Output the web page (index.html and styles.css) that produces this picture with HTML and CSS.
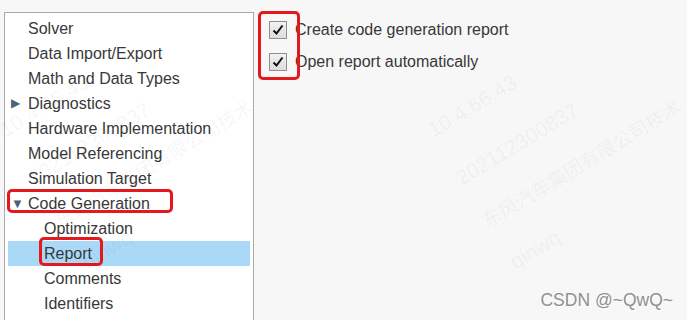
FILE: index.html
```html
<!DOCTYPE html>
<html>
<head>
    <title>Configuration Parameters</title>
    <link rel="stylesheet" href="styles.css">
</head>
<body>
    <div id="container">
        <div class="tree">
            <ul class="tree-list">
                <li class="item">Solver</li>
                <li class="item">Data Import/Export</li>
                <li class="item">Math and Data Types</li>
                <li class="item"><span class="arrow">&#9654;</span>Diagnostics</li>
                <li class="item">Hardware Implementation</li>
                <li class="item">Model Referencing</li>
                <li class="item">Simulation Target</li>
                <li class="item"><span class="arrow down">&#9660;</span>Code Generation<span class="mark mark-codegen"></span></li>
                <li class="item sub">Optimization</li>
                <li class="item sub selected">Report<span class="mark mark-report"></span></li>
                <li class="item sub">Comments</li>
                <li class="item sub">Identifiers</li>
            </ul>
        </div>
        <div class="settings">
            <label class="option">
                <span class="checkbox"><svg width="16" height="16" viewBox="0 0 16 16"><path d="M3.5 8.5 L6.5 11.5 L12.5 3.5" fill="none" stroke="#111" stroke-width="2"/></svg></span>
                Create code generation report
            </label>
            <label class="option">
                <span class="checkbox"><svg width="16" height="16" viewBox="0 0 16 16"><path d="M3.5 8.5 L6.5 11.5 L12.5 3.5" fill="none" stroke="#111" stroke-width="2"/></svg></span>
                Open report automatically
            </label>
            <span class="mark mark-checks"></span>
        </div>
    </div>

    <!-- 水印 -->
    <div class="watermark wm-right">
        <span class="wm wm-ip">10.4.66.43</span>
        <span class="wm wm-date">202112300837</span>
        <span class="wm wm-company">东风汽车集团有限公司技术</span>
        <span class="wm wm-user">qinwq</span>
    </div>
    <div class="watermark wm-left">
        <span class="wm wm-ip">10.4.66.43</span>
        <span class="wm wm-date">202112300837</span>
        <span class="wm wm-company">东风汽车集团有限公司技术</span>
        <span class="wm wm-user">qinwq</span>
    </div>

    <div class="credit">CSDN @~QwQ~</div>
</body>
</html>
```

FILE: styles.css
```css
:root {
    --bg-color: #f7f7f7;
    --text-color: #383838;
    --border-color: #a9a9a9;
    --select-color: #a9d9f7;
    --mark-color: #e4191e;
}

html, body {
    height: 100%;
}

body {
    margin: 0;
    background-color: var(--bg-color);
    color: var(--text-color);
    font-family: "Liberation Sans", Arial, sans-serif;
    font-size: 16px;
    overflow: hidden;
    position: relative;
}

#container {
    display: flex;
    height: 100%;
    padding: 12px 0 0 4px;
    box-sizing: border-box;
}

.tree {
    width: 250px;
    box-sizing: border-box;
    background-color: white;
    border: 1px solid var(--border-color);
    border-bottom: none;
    padding: 3px 3px 0 3px;
}

.tree-list {
    list-style: none;
    margin: 0;
    padding: 0;
}

.item {
    position: relative;
    height: 25px;
    line-height: 25px;
    padding-left: 20px;
    white-space: nowrap;
}

.item.sub {
    padding-left: 36px;
}

.item.selected {
    background-color: var(--select-color);
}

.arrow {
    position: absolute;
    left: 3px;
    top: 0;
    font-size: 12px;
    color: #4c6178;
}

.arrow.down {
    left: 3px;
    font-size: 13px;
}

.settings {
    position: relative;
    padding: 2px 0 0 15px;
}

.option {
    display: flex;
    align-items: center;
    gap: 8px;
    height: 32px;
    white-space: nowrap;
}

.checkbox {
    display: flex;
    width: 16px;
    height: 16px;
    border: 1px solid #8f8f8f;
    background: linear-gradient(#f2f2f2, #dcdcdc);
}

/* 红框标注 */
.mark {
    position: absolute;
    border: 3px solid var(--mark-color);
    border-radius: 5px;
    box-sizing: border-box;
}

.mark-codegen {
    left: -1px;
    top: -2px;
    width: 166px;
    height: 24px;
}

.mark-report {
    left: 31px;
    top: -4px;
    width: 64px;
    height: 29px;
}

.mark-checks {
    left: 4px;
    top: -1px;
    width: 42px;
    height: 69px;
}

/* 水印 */
.watermark {
    position: absolute;
    top: 0;
    width: 320px;
    height: 320px;
    pointer-events: none;
}

.wm-right {
    left: 428px;
}

.wm-left {
    left: 0;
}

.wm {
    position: absolute;
    color: rgba(0, 0, 0, 0.05);
    font-size: 21px;
    white-space: nowrap;
    transform: rotate(-31deg);
    transform-origin: left bottom;
}

.wm-ip {
    left: 8px;
    top: 118px;
}

.wm-date {
    left: 36px;
    top: 166px;
}

.wm-company {
    left: 62px;
    top: 206px;
    font-family: "Noto Sans CJK SC", sans-serif;
    font-size: 19px;
}

.wm-user {
    left: 90px;
    top: 250px;
}

.credit {
    position: absolute;
    right: 14px;
    bottom: 9px;
    font-size: 17.5px;
    color: #909090;
    text-shadow: 1px 1px 0 #fff;
}
```
